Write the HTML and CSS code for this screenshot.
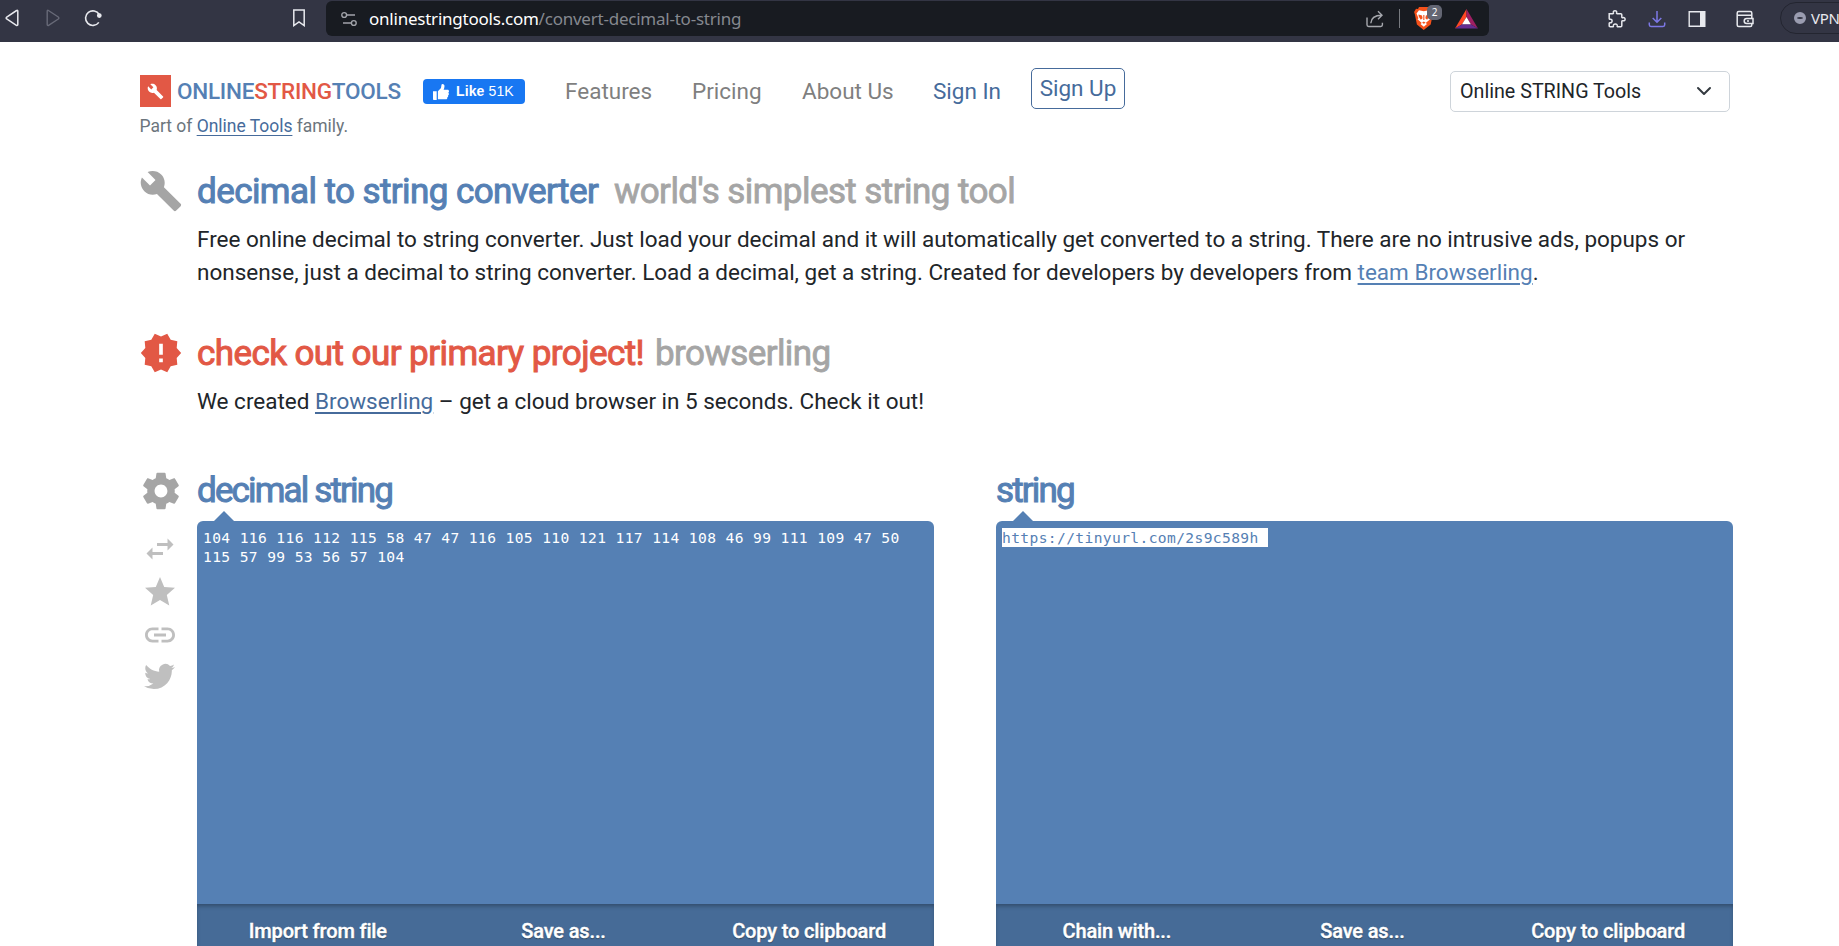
FILE: index.html
```html
<!DOCTYPE html>
<html lang="en">
<head>
<meta charset="utf-8">
<title>Decimal to String Converter</title>
<link rel="stylesheet" href="styles.css">
</head>
<body>
<div class="browser">
  <div class="nav-buttons">
    <svg width="14" height="18" viewBox="0 0 14 18" fill="none" stroke="#e8e9ee" stroke-width="1.5"><path d="M11.6 1.5 1.7 8c-.7.5-.7 1.5 0 2l9.700 6.300c.7.4 1.400.1 1.400-.7V2.200c0-.8-.6-1.100-1.200-.7z"/></svg>
    <svg width="14" height="18" viewBox="0 0 14 18" fill="none" stroke="#686a78" stroke-width="1.4"><path d="M2.400 1.500 12.300 8c.7.5.7 1.500 0 2l-9.700 6.300c-.7.4-1.400.1-1.400-.7V2.200c0-.8.6-1.100 1.200-.7z"/></svg>
    <svg width="18" height="18" viewBox="0 0 18 18" fill="none" stroke="#e8e9ee" stroke-width="1.6"><path d="M14.800 13.400A7.300 7.300 0 1 1 15.200 5.500"/><circle cx="15.300" cy="6.600" r="1.600" fill="#e8e9ee"/></svg>
  </div>
  <svg class="bookmark" width="14" height="18" viewBox="0 0 14 18" fill="none" stroke="#e8e9ee" stroke-width="1.5"><path d="M1.800 1h10.400v15.600L7 13l-5.200 3.600z"/></svg>
  <div class="address">
    <svg width="16" height="16" viewBox="0 0 16 16" fill="none" stroke="#a1a3aa" stroke-width="1.4"><circle cx="3.200" cy="4" r="2.400"/><path d="M6 4h8M2 12h8"/><circle cx="12.800" cy="12" r="2.400"/></svg>
    <span class="url"><b>onlinestringtools.com</b>/convert-decimal-to-string</span>
    <svg class="share" width="18" height="18" viewBox="0 0 18 18" fill="none" stroke="#a6a8ae" stroke-width="1.4"><path d="M1 7.500v7.300c0 1 .6 1.700 1.600 1.700h12.200c1 0 1.600-.7 1.600-1.700v-2"/><path d="M4.800 13.300C5 8.300 8.500 5.300 15.800 5.200M12 1.200l4 4-4 4"/></svg>
    <span class="divider"></span>
    <span class="shield">
      <svg width="20" height="23" viewBox="0 0 20 23"><path fill="#f4511a" d="M5 0h9l2 2 2-.3L19.500 5l-.8 2.400-2 10.200-7 5.400-6.800-5.400L.9 7.400.1 5 2 1.700 4 2z"/><path fill="#fff" d="m5 3.200 4.800 1 4.700-1 2.600 3.400-2 4.600 1 1-4.400 3.700 1.300 1.200-3.200 2.700-3.300-2.700 1.300-1.200-4.300-3.700 1-1-2-4.600z"/><path fill="#f4511a" d="M4.400 7.500 8 8.600l.6 2.600-1.800 1.600-2-3zM15.400 7.500l-3.500 1.100-.6 2.600 1.800 1.600 2-3zM8 15.800l1.800 1 1.900-1-1.900-1.200zM9.300 8h1.100v5H9.300z"/></svg>
      <i class="count">2</i>
    </span>
    <svg class="bat" width="23" height="20" viewBox="0 0 23 20"><path fill="#ff4724" d="M11.500 0 0 19.500l7.200-4.300 4.300-7.300z"/><path fill="#9e1f63" d="m11.500 0 11.500 19.500-7.400-4.300-4.100-7.300z"/><path fill="#662d91" d="M0 19.500h23l-7.400-4.300H7.200z"/><path fill="#fff" d="m11.500 7.900 4.300 7.400H7.100z"/></svg>
  </div>
  <div class="extensions">
    <svg width="18" height="18" viewBox="0 0 18 18" fill="none" stroke="#e8e9ee" stroke-width="1.5"><path d="M1.200 3.700h3.600c.6 0 .8-.5.6-1C5 1.500 5.800.8 7 .8s2 .8 1.600 1.900c-.2.5 0 1 .6 1h3.600c.6 0 1 .4 1 1v2.300c0 .6.5.9 1 .7 1.200-.4 2.300.2 2.300 1.500s-1.100 1.900-2.300 1.500c-.5-.2-1 .1-1 .7v4.400c0 .6-.4 1-1 1H9.900c-.6 0-.8-.4-.7-.9.2-1.200-.6-2-1.900-2s-2.100.8-1.900 2c.1.500-.1.900-.7.900H2.200c-.6 0-1-.4-1-1v-2.400c0-.6.400-.8.900-.7 1.200.3 2-.5 2-1.700s-.8-2-2-1.700c-.5.100-.9-.1-.9-.7z"/></svg>
    <svg width="18" height="18" viewBox="0 0 18 18" fill="none" stroke="#7d78e6" stroke-width="1.5"><path d="M9 1v11M4.700 8 9 12.200 13.300 8M1.300 12.500v2.200c0 1 .7 1.700 1.700 1.700h12c1 0 1.700-.7 1.700-1.700v-2.200"/></svg>
    <svg width="18" height="18" viewBox="0 0 18 18"><path fill="none" stroke="#e8e9ee" stroke-width="1.400" d="M1.200 1.700h15.600v14.600H1.200z"/><path fill="#e8e9ee" d="M12 1.500h5v15h-5z"/></svg>
    <svg width="18" height="18" viewBox="0 0 18 18" fill="none" stroke="#e8e9ee" stroke-width="1.500"><path d="M15.800 5V3c0-.9-.6-1.500-1.500-1.500H2.700c-.9 0-1.500.6-1.500 1.500v12c0 .9.600 1.500 1.500 1.500h11.600c.9 0 1.500-.6 1.500-1.500v-1.500M1.200 5.200h14.600v3.300"/><path d="M17 8.500h-6.300a2.500 2.500 0 0 0 0 5H17zM11 11h2"/></svg>
  </div>
  <div class="vpn"><i></i>VPN</div>
</div>

<div class="page">
  <header class="header">
    <div class="brand">
      <div class="logo">
        <span class="logo-mark"><svg width="17" height="17" viewBox="0 0 24 24" fill="#fff"><path d="M22.700 19l-9.100-9.100c.9-2.300.4-5-1.500-6.900-2-2-5-2.400-7.400-1.300L9 6 6 9 1.600 4.700C.4 7.100.9 10.100 2.900 12.100c1.900 1.900 4.600 2.400 6.900 1.500l9.100 9.100c.4.4 1 .4 1.400 0l2.300-2.300c.5-.4.5-1.100.1-1.400z"/></svg></span>
        <span class="logo-text">ONLINE<em>STRING</em>TOOLS</span>
      </div>
      <p class="family">Part of <a>Online Tools</a> family.</p>
    </div>
    <div class="like"><svg width="16" height="16" viewBox="0 0 16 16" fill="#fff"><path d="M0 7.200h3.700V16H.8c-.5 0-.8-.3-.8-.8zM4.900 15.200V7.300L8 3.900 8.500.8c.1-.5.5-.8 1-.8 1.400 0 2 1 2 2.200 0 1.300-.5 2.500-.9 3.600h3.900c1 0 1.500.7 1.500 1.500s-.4 1.200-.8 1.400c.5.300.7.700.7 1.200 0 .8-.5 1.200-1 1.400.3.300.4.600.3 1-.1.700-.5 1-1 1.200.3.900-.2 1.800-1.300 1.800H8.200c-1.300 0-2.300-.1-3.300-.1z"/></svg><span><b>Like</b> 51K</span></div>
    <nav class="menu">
      <a class="features">Features</a><a class="pricing">Pricing</a><a class="about">About Us</a><a class="signin">Sign In</a><a class="signup">Sign Up</a>
    </nav>
    <div class="select"><span>Online STRING Tools</span><svg width="16" height="16" viewBox="0 0 16 16" fill="none" stroke="#343a40" stroke-width="2" stroke-linecap="round" stroke-linejoin="round"><path d="m2 5 6 6 6-6"/></svg></div>
  </header>

  <section class="intro">
    <svg class="icon" viewBox="0 0 24 24" fill="#a5a5a5"><path d="M22.700 19l-9.100-9.100c.9-2.300.4-5-1.500-6.900-2-2-5-2.400-7.400-1.300L9 6 6 9 1.600 4.700C.4 7.100.9 10.100 2.900 12.100c1.900 1.900 4.600 2.400 6.900 1.500l9.100 9.100c.4.4 1 .4 1.400 0l2.300-2.300c.5-.4.5-1.100.1-1.400z"/></svg>
    <div>
      <h1><span class="h-main">decimal to string converter</span><span class="h-sub wide">world's simplest string tool</span></h1>
      <p class="text">Free online decimal to string converter. Just load your decimal and it will automatically get converted to a string. There are no intrusive ads, popups or<br>nonsense, just a decimal to string converter. Load a decimal, get a string. Created for developers by developers from <a class="team">team Browserling</a>.</p>
    </div>
  </section>

  <section class="intro promo">
    <svg class="icon" viewBox="0 0 24 24" fill="#e25845"><path d="M23 12l-2.440-2.780.34-3.680-3.610-.82-1.890-3.180L12 3 8.600 1.540 6.710 4.720l-3.610.81.34 3.680L1 12l2.440 2.780-.34 3.690 3.610.82 1.890 3.180L12 21l3.400 1.460 1.890-3.180 3.610-.82-.34-3.680L23 12zm-10 5h-2v-2h2v2zm0-4h-2V7h2v6z"/></svg>
    <div>
      <h1><span class="h-red">check out our primary project!</span><span class="h-sub">browserling</span></h1>
      <p class="text">We created <a>Browserling</a> – get a cloud browser in 5 seconds. Check it out!</p>
    </div>
  </section>

  <main class="tool">
    <div class="rail">
      <svg class="gear" viewBox="0 0 24 24" fill="#a5a5a5"><path d="M19.430 12.980c.04-.32.07-.64.07-.98s-.03-.66-.07-.98l2.110-1.650c.19-.15.24-.42.12-.64l-2-3.460c-.12-.22-.39-.3-.61-.22l-2.490 1c-.52-.4-1.080-.73-1.690-.98l-.38-2.650C14.460 2.180 14.250 2 14 2h-4c-.25 0-.46.180-.49.420l-.38 2.650c-.61.25-1.170.59-1.690.98l-2.490-1c-.23-.09-.49 0-.61.220l-2 3.460c-.13.22-.07.49.12.64l2.110 1.650c-.04.32-.07.65-.07.98s.03.66.07.98l-2.110 1.650c-.19.15-.24.42-.12.64l2 3.460c.12.22.39.3.61.22l2.490-1c.52.4 1.080.73 1.690.98l.38 2.650c.03.240.24.420.49.420h4c.25 0 .46-.18.49-.42l.38-2.650c.61-.25 1.170-.59 1.690-.98l2.490 1c.23.09.49 0 .61-.22l2-3.460c.12-.22.07-.49-.12-.64l-2.110-1.650zM12 15.500c-1.930 0-3.500-1.570-3.500-3.500s1.570-3.500 3.500-3.500 3.500 1.570 3.500 3.500-1.570 3.500-3.500 3.500z"/></svg>
      <svg viewBox="0 0 24 24"><path d="M6.990 11L3 15l3.990 4v-3H14v-2H6.990v-3zM21 9l-3.990-4v3H10v2h7.010v3L21 9z"/></svg>
      <svg viewBox="0 0 24 24"><path d="M12 17.270L18.180 21l-1.640-7.030L22 9.240l-7.190-.61L12 2 9.190 8.630 2 9.240l5.460 4.730L5.820 21z"/></svg>
      <svg viewBox="0 0 24 24"><path d="M3.900 12c0-1.710 1.390-3.100 3.100-3.100h4V7H7c-2.760 0-5 2.240-5 5s2.240 5 5 5h4v-1.900H7c-1.710 0-3.100-1.390-3.100-3.100zM8 13h8v-2H8v2zm9-6h-4v1.900h4c1.710 0 3.100 1.390 3.100 3.100s-1.390 3.100-3.100 3.100h-4V17h4c2.760 0 5-2.240 5-5s-2.240-5-5-5z"/></svg>
      <svg class="bird" viewBox="0 0 24 24"><path d="M23.953 4.570a10 10 0 01-2.825.775 4.958 4.958 0 002.163-2.723c-.951.555-2.005.959-3.127 1.184a4.920 4.920 0 00-8.384 4.482C7.690 8.095 4.067 6.130 1.640 3.162a4.822 4.822 0 00-.666 2.475c0 1.710.87 3.213 2.188 4.096a4.904 4.904 0 01-2.228-.616v.06a4.923 4.923 0 003.946 4.827 4.996 4.996 0 01-2.212.085 4.936 4.936 0 004.604 3.417 9.867 9.867 0 01-6.102 2.105c-.39 0-.779-.023-1.170-.067a13.995 13.995 0 007.557 2.209c9.053 0 13.998-7.496 13.998-13.985 0-.21 0-.42-.015-.63A9.935 9.935 0 0024 4.590z"/></svg>
    </div>
    <div class="pane">
      <h2>decimal string</h2>
      <div class="box">
        <div class="code">104 116 116 112 115 58 47 47 116 105 110 121 117 114 108 46 99 111 109 47 50<br>115 57 99 53 56 57 104</div>
        <div class="actions"><span>Import from file</span><span>Save as...</span><span>Copy to clipboard</span></div>
      </div>
    </div>
    <div class="pane">
      <h2>string</h2>
      <div class="box">
        <div class="code"><mark>https://tinyurl.com/2s9c589h </mark></div>
        <div class="actions"><span>Chain with...</span><span>Save as...</span><span>Copy to clipboard</span></div>
      </div>
    </div>
  </main>
</div>
</body>
</html>
```
FILE: styles.css
```css
* { box-sizing: border-box; }
html, body { margin: 0; height: 946px; overflow: hidden; }
body { background: #fff; color: #212529; font-family: Roboto, "Liberation Sans", sans-serif; }
p, h1, h2 { margin: 0; }
svg { display: block; flex: none; }
i, em { font-style: normal; }

/* browser toolbar */
.browser { display: flex; height: 42px; background: #333544; overflow: hidden; }
.browser > * { flex: none; }
.nav-buttons { display: flex; justify-content: space-between; width: 97px; margin: 9px 0 0 5px; }
.nav-buttons svg:nth-child(2) { margin-left: 3px; }
.bookmark { margin: 9px 0 0 190px; }
.address { display: flex; align-items: center; width: 1163px; height: 35px; margin: 1px 0 0 20px; padding: 0 11px 0 15px; background: #181b21; border-radius: 6px; }
.url { margin-left: 12px; color: #85888f; font: 17px/24px "Noto Sans", sans-serif; letter-spacing: -.23px; white-space: nowrap; }
.url b { color: #fff; font-weight: 400; }
.share { margin-left: auto; }
.divider { width: 1px; height: 19px; margin: 0 14px 0 15px; background: #777a80; }
.shield { position: relative; margin-right: 21px; }
.count { position: absolute; left: 13px; top: -2px; width: 15px; height: 15px; border-radius: 5px; background: #636673; color: #fff; font: 10px/15px "Noto Sans", sans-serif; text-align: center; }
.extensions { display: flex; margin: 10px 0 0 119px; gap: 22px; }
.extensions svg:last-child { margin-left: 8px; }
.vpn { display: flex; align-items: center; width: 90px; height: 32px; margin: 2px 0 0 26px; padding-left: 13px; gap: 5px; border: 1px solid #232530; border-radius: 16px; color: #e8e9ee; font: 15px/30px "Noto Sans", sans-serif; letter-spacing: -.3px; }
.vpn i { width: 12px; height: 12px; border: solid #9a9cb0; border-width: 5px 3px; border-radius: 50%; }

/* site header */
.page { width: 1593px; margin-left: 140px; }
.header { display: flex; height: 118px; padding-top: 26px; }
.brand { width: 283px; padding-top: 7px; }
.logo { display: flex; align-items: center; height: 32px; }
.logo-mark { display: grid; place-items: center; width: 31px; height: 32px; margin-right: 6px; background: #e25845; }
.logo-text { color: #5580b4; font-size: 22.5px; font-weight: 500; line-height: 32px; letter-spacing: -.25px; white-space: nowrap; }
.logo-text em { color: #e25845; }
.family { margin-top: 7px; margin-left: -.5px; color: #6c757d; font-size: 17.5px; line-height: 24px; letter-spacing: -.02px; white-space: nowrap; }
a { color: #466b9b; }
.family a, .text a { text-decoration: underline; text-underline-offset: 3px; }
.like { display: flex; align-items: center; width: 102px; height: 25px; margin-top: 11px; padding-left: 10px; gap: 7px; border-radius: 4px; background: #1877f2; color: #fff; font: 14px/24px "Liberation Sans", sans-serif; letter-spacing: .12px; white-space: nowrap; }
.like span { position: relative; top: -1px; }
.menu { display: flex; height: 42px; margin-left: 40px; font-size: 22.5px; line-height: 46px; white-space: nowrap; }
.menu a { color: #7f7f7f; }
.features { width: 127px; }
.pricing { width: 110px; }
.about { width: 131px; }
.menu .signin, .menu .signup { color: #466b9b; }
.signin { width: 98px; }
.signup { width: 94px; height: 41px; border: 1px solid #466b9b; border-radius: 5px; line-height: 39px; text-align: center; }
.select { display: flex; align-items: center; justify-content: space-between; width: 280px; height: 41px; margin-top: 3px; margin-left: auto; margin-right: 3px; padding: 0 17px 1px 9px; border: 1px solid #ced4da; border-radius: 5px; font-size: 19.7px; }

/* intro blocks */
.intro { display: grid; grid-template-columns: 57px 1fr; height: 162px; }
.icon { width: 44px; height: 44px; margin: 9px 0 0 -1px; }
h1 { display: flex; padding-top: 11px; font-size: 35px; font-weight: 400; line-height: 42px; white-space: nowrap; }
.h-main { width: 417px; color: #5580b4; -webkit-text-stroke: 1px; letter-spacing: -.58px; }
.h-red { width: 458px; color: #e25845; -webkit-text-stroke: 1px; letter-spacing: -.57px; }
.h-sub { color: #a5a5a5; -webkit-text-stroke: .8px; letter-spacing: -.57px; }
.text { margin-top: 10px; font-size: 22.5px; line-height: 33px; letter-spacing: -.008px; white-space: nowrap; }
.text .team { color: #5580b4; }
.promo { height: 146px; }

/* converter */
.tool { display: flex; padding-top: 1px; }
.rail { width: 57px; padding-left: 2px; fill: #bfbfbf; }
.rail svg { width: 36px; height: 36px; margin: 0 0 7px 0; }
.rail .gear { width: 44px; height: 44px; margin: 0 0 18px -3px; }
.rail .bird { width: 31px; height: 31px; margin: 8px 0 0 2px; }
.pane { width: 737px; }
.pane + .pane { margin-left: 62px; }
h2 { height: 52px; color: #5580b4; font-size: 35px; font-weight: 400; line-height: 44px; letter-spacing: -1.85px; -webkit-text-stroke: 1px; }
.box { position: relative; height: 440px; background: #5580b4; border-radius: 6px; }
.box::before { content: ""; position: absolute; left: 17px; top: -10px; border: solid transparent; border-width: 0 10px 10px; border-bottom-color: #5580b4; }
.code { height: 383px; padding: 7px 6px; color: #fff; font: 14.6px/19px "DejaVu Sans Mono", monospace; letter-spacing: .38px; white-space: pre; }
mark { display: inline-block; height: 19px; background: #fff; color: #5580b4; }
.actions { display: grid; grid-template-columns: repeat(3, 1fr); height: 57px; background: #466b97; box-shadow: inset 0 3px 4px -1px rgba(0,0,0,.3); color: #fff; font-size: 20px; font-weight: 500; line-height: 54px; text-align: center; letter-spacing: -.15px; -webkit-text-stroke: .4px; text-shadow: 0 1px 1px rgba(0,0,0,.5); }
.actions span { margin-left: -4px; }
```
